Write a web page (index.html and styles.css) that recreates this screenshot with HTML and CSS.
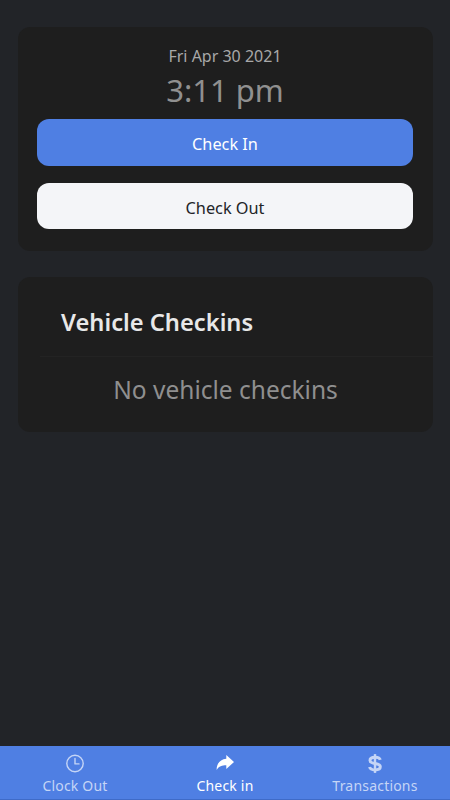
FILE: index.html
```html
<!DOCTYPE html>
<html lang="en">
<head>
  <meta charset="UTF-8" />
  <meta name="viewport" content="width=device-width, initial-scale=1.0" />
  <title>Check In</title>
  <link rel="stylesheet" href="styles.css">
</head>
<body>
  <main class="content">
    <section class="card clock-card">
      <div class="date-label">Fri Apr 30 2021</div>
      <div class="time-label">3:11 pm</div>
      <button class="btn btn-primary">Check In</button>
      <button class="btn btn-light">Check Out</button>
    </section>
    <section class="card checkins-card">
      <h2 class="card-title">Vehicle Checkins</h2>
      <p class="empty-label">No vehicle checkins</p>
    </section>
  </main>
  <nav class="tab-bar">
    <a class="tab">
      <svg class="tab-icon" viewBox="0 0 20 20" width="20" height="20" fill="none" stroke="currentColor" stroke-width="1.4" stroke-linecap="round" stroke-linejoin="round">
        <circle cx="10" cy="10" r="8.2" />
        <path d="M10 5v5.4h4" />
      </svg>
      <span>Clock Out</span>
    </a>
    <a class="tab active">
      <svg class="tab-icon" viewBox="0 0 20 20" width="20" height="20" fill="currentColor">
        <path d="M11.300 1.400 19 8.600l-7.700 7v-3.900c-4.200 0-7.300.9-9.700 4.700C1.600 10.400 4.800 6 11.300 5.300z" />
      </svg>
      <span>Check in</span>
    </a>
    <a class="tab">
      <svg class="tab-icon" viewBox="0 0 20 20" width="20" height="20" fill="none" stroke="currentColor" stroke-width="3">
        <path d="M15.200 6.400C14.800 4.500 12.600 3.800 10 3.800c-2.900 0-5 1.200-5 3.100 0 4.500 10.300 1.900 10.300 6.400 0 2-2.200 3.100-5.300 3.100-2.800 0-4.900-.9-5.400-2.900" />
        <path d="M10 .6v18.800" stroke-width="2.400" />
      </svg>
      <span>Transactions</span>
    </a>
  </nav>
</body>
</html>
```

FILE: styles.css
```css
* {
  box-sizing: border-box;
}
html,
body {
  height: 100%;
}
body {
  margin: 0;
  display: flex;
  flex-direction: column;
  background: #222428;
  color: #f0f0f0;
  font-family: "Noto Sans", "Open Sans", sans-serif;
}
.content {
  flex: 1;
  padding: 27px 17px 0 18px;
}
.card {
  background: #1e1e1e;
  border-radius: 12px;
}
.clock-card {
  height: 224px;
  padding: 19px 20px 0 19px;
  margin-bottom: 26px;
  text-align: center;
}
.date-label {
  font-size: 16px;
  line-height: 20px;
  color: #a8a8a8;
}
.time-label {
  font-size: 31px;
  line-height: 42px;
  margin-top: 3px;
  height: 50px;
  color: #909090;
}
.btn {
  display: block;
  width: 100%;
  height: 46.500px;
  border: none;
  border-radius: 12px;
  font-family: inherit;
  font-size: 16.300px;
  padding: 4px 0 0;
}
.btn-primary {
  background: #4f7fe3;
  color: #ffffff;
  margin-bottom: 17px;
}
.btn-light {
  background: #f4f5f8;
  color: #222428;
}
.checkins-card {
  height: 155px;
}
.card-title {
  margin: 0 0 0 22px;
  padding: 29px 0 17px 21px;
  height: 80px;
  border-bottom: 1px solid #232323;
  font-size: 23.700px;
  line-height: 33px;
  font-weight: 600;
  color: #e8e8e8;
}
.empty-label {
  margin: 15px 0 0;
  text-align: center;
  font-size: 24.500px;
  line-height: 36px;
  color: #8f8f8f;
}
.tab-bar {
  display: flex;
  height: 54px;
  background: #4f7fe3;
  border-bottom: 1px solid #3f6bc8;
}
.tab {
  flex: 1;
  display: flex;
  flex-direction: column;
  align-items: center;
  gap: 2px;
  padding-top: 7px;
  color: #c5d5f6;
  font-size: 14px;
  line-height: 20px;
  letter-spacing: 0.2px;
}
.tab.active {
  color: #ffffff;
}
.tab-icon {
  display: block;
  height: 21px;
}
```
